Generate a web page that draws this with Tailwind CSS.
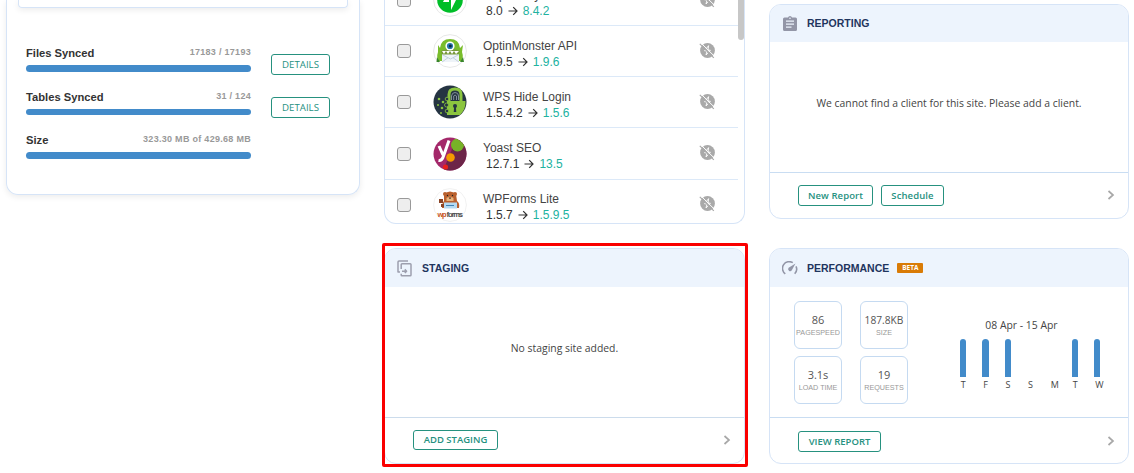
<!DOCTYPE html>
<html lang="en">
<head>
  <meta charset="UTF-8">
  <meta name="viewport" content="width=device-width, initial-scale=1.0">
  <title>Site Dashboard</title>
  <script src="https://cdn.jsdelivr.net/npm/@tailwindcss/browser@4"></script>
</head>

<body class="relative flex h-[473px] w-[1134px] items-start overflow-hidden bg-white pl-1.5 font-['Open_Sans',sans-serif] text-[#444]">

  <!-- Icons -->
  <svg class="hidden">
    <symbol id="arrow" viewBox="0 0 10 10">
      <path d="M0.5 5H9M5.2 1.2L9 5L5.2 8.8" fill="none" stroke="#333" stroke-width="1.2"/>
    </symbol>
    <symbol id="chevron" viewBox="0 0 8 10">
      <path d="M1.5 1L6 5L1.5 9" fill="none" stroke="#a8a8a8" stroke-width="1.7"/>
    </symbol>
    <symbol id="bolt-off" viewBox="0 0 17 17">
      <circle cx="8.5" cy="8.5" r="7.4" fill="#a9a9a9"/>
      <path d="M9.6 3.6L5.6 8.8H8L7 13L11.4 8.2H9Z" fill="none" stroke="#fff" stroke-width=".9"/>
      <path d="M2.2 1.2L16 14.8" stroke="#fff" stroke-width="1"/>
      <path d="M0.8 1.8L14.8 15.8" stroke="#a9a9a9" stroke-width="1.2"/>
    </symbol>
  </svg>

  <!-- Sync status -->
  <section class="h-[195px] w-[354px] rounded-b-xl border border-t-0 border-[#d6e4f7] px-[11px] shadow-[0_2px_6px_rgba(0,0,0,0.08)]">
    <div class="h-2 w-[330px] rounded-b border border-t-0 border-[#d6e4f7] shadow-[0_2px_6px_rgba(0,0,0,0.08)]"></div>
    <div class="flex pt-[38px] pl-2">
      <div class="w-[225px] font-['Liberation_Sans',sans-serif] font-bold">
        <div class="h-[43px]">
          <div class="flex h-[19px] justify-between"><span class="text-[11.2px] leading-[15px] text-[#333]">Files Synced</span><span class="text-[9px] leading-3 tracking-[0.29px] text-[#999]">17183 / 17193</span></div>
          <div class="h-[7px] rounded-full bg-[#428bca]"></div>
        </div>
        <div class="h-[44px] pt-px">
          <div class="flex h-[19px] justify-between"><span class="text-[11.2px] leading-[15px] text-[#333]">Tables Synced</span><span class="text-[9px] leading-3 tracking-[0.29px] text-[#999]">31 / 124</span></div>
          <div class="h-1.5 rounded-full bg-[#428bca]"></div>
        </div>
        <div>
          <div class="flex h-[19px] justify-between"><span class="text-[11.2px] leading-[15px] text-[#333]">Size</span><span class="text-[9px] leading-3 tracking-[0.29px] text-[#999]">323.30 MB of 429.68 MB</span></div>
          <div class="h-[7px] rounded-full bg-[#428bca]"></div>
        </div>
      </div>
      <div class="flex flex-col gap-[22px] pt-2 pl-5">
        <button class="h-[21px] w-[59px] rounded-[3px] border border-[#26917f] pt-0.5 text-[9.7px] font-medium text-[#26917f]">DETAILS</button>
        <button class="h-[21px] w-[59px] rounded-[3px] border border-[#26917f] pt-0.5 text-[9.7px] font-medium text-[#26917f]">DETAILS</button>
      </div>
    </div>
  </section>

  <div class="ml-6 w-[361px]">
    <!-- Plugin updates -->
    <section class="relative h-[224px] overflow-hidden rounded-b-xl border border-t-0 border-[#d6e4f7] font-['Liberation_Sans',sans-serif] text-[12px]">
      <div class="-mt-[25px] w-[353px]">
        <div class="flex h-[51px] items-center border-b border-[#dce9f8] pl-3">
          <span class="size-3.5 rounded-[3px] border border-[#999] bg-[#eee]"></span>
          <svg class="ml-[22px] size-[34px]" viewBox="0 0 34 34">
            <circle cx="17" cy="17" r="16.4" fill="#fff" stroke="#ddd" stroke-width=".7"/>
            <circle cx="17" cy="17" r="12.8" fill="#00be28"/>
            <path d="M16 7V19H10Z M18 27V15H24Z" fill="#fff"/>
          </svg>
          <div class="ml-4 pt-1.5 leading-4"><div>Jetpack by WordPress.com</div><div class="flex items-center gap-[5px] pl-[3px] text-[#333]">8.0 <svg class="size-2.5"><use href="#arrow"/></svg> <span class="text-[#22b29f]">8.4.2</span></div></div>
          <svg class="mr-[22px] mb-0.5 ml-auto size-[17px]"><use href="#bolt-off"/></svg>
        </div>
        <div class="flex h-[51px] items-center border-b border-[#dce9f8] pl-3">
          <span class="size-3.5 rounded-[3px] border border-[#999] bg-[#eee]"></span>
          <svg class="ml-[22px] size-[34px]" viewBox="0 0 34 34">
            <circle cx="17" cy="17" r="16.4" fill="#fff" stroke="#ddd" stroke-width=".7"/>
            <path d="M5 11L7 14Q8 5 17 5Q26 5 27 14L30 11L29 18Q31 24 28 27H6Q3 24 5 18Z" fill="#79bd2b"/>
            <path d="M4 23L7 28H3.5ZM30 23L27 28H31Z" fill="#39852c"/>
            <path d="M8 17Q17 13 27 17L25 21H9Z" fill="#78983c"/>
            <path d="M9 17L11 20L13 17L15 20L17 17L19 20L21 17L23 20L26 17Z" fill="#fff"/>
            <circle cx="17" cy="12" r="4.6" fill="#fff"/><circle cx="17" cy="12" r="3.1" fill="#2677ac"/><circle cx="17.3" cy="12" r="1.5" fill="#102a42"/>
            <path d="M9 20.5H26V28H9Z" fill="#eef3f8"/><path d="M9 20.5L17.5 25L26 20.5M9 28L15 23.7M26 28L20 23.7" fill="none" stroke="#b7c8d6" stroke-width=".8"/>
          </svg>
          <div class="ml-4 pt-1.5 leading-4"><div>OptinMonster API</div><div class="flex items-center gap-[5px] pl-[3px] text-[#333]">1.9.5 <svg class="size-2.5"><use href="#arrow"/></svg> <span class="text-[#22b29f]">1.9.6</span></div></div>
          <svg class="mr-[22px] mb-0.5 ml-auto size-[17px]"><use href="#bolt-off"/></svg>
        </div>
        <div class="flex h-[51px] items-center border-b border-[#dce9f8] pl-3">
          <span class="size-3.5 rounded-[3px] border border-[#999] bg-[#eee]"></span>
          <svg class="ml-[22px] size-[34px]" viewBox="0 0 34 34">
            <circle cx="17" cy="17" r="16.5" fill="#253442"/>
            <path d="M16 17V9.5Q16 4 22 4Q28 4 28 9.5V17" fill="none" stroke="#8bc53f" stroke-width="3"/>
            <path d="M14 16H32.5Q33 24 27 30H14Z" fill="#8bc53f"/>
            <path d="M18.5 15V11Q19 7.5 22 7.5Q25.5 7.5 25.5 11V15M20.7 15V11Q22 9 23.5 11V15" fill="none" stroke="#81909a" stroke-width="1"/>
            <circle cx="22" cy="21" r="2" fill="#253442"/><path d="M21.2 21H22.8L23.3 27H20.7Z" fill="#253442"/>
            <g fill="#8bc53f"><circle cx="6" cy="14" r="1.3"/><circle cx="10" cy="17" r="1.3"/><circle cx="5" cy="20" r="1"/><circle cx="9" cy="23" r="1.3"/><circle cx="8" cy="28" r="1"/></g>
            <g fill="#253442" stroke="#8bc53f" stroke-width=".8"><circle cx="14" cy="14" r="1.8"/><circle cx="13.5" cy="20" r="2"/><circle cx="14" cy="26" r="1.8"/></g>
          </svg>
          <div class="ml-4 pt-1.5 leading-4"><div>WPS Hide Login</div><div class="flex items-center gap-[5px] pl-[3px] text-[#333]">1.5.4.2 <svg class="size-2.5"><use href="#arrow"/></svg> <span class="text-[#22b29f]">1.5.6</span></div></div>
          <svg class="mr-[22px] mb-0.5 ml-auto size-[17px]"><use href="#bolt-off"/></svg>
        </div>
        <div class="flex h-[52px] items-center border-b border-[#dce9f8] pl-3">
          <span class="size-3.5 rounded-[3px] border border-[#999] bg-[#eee]"></span>
          <svg class="ml-[22px] size-[34px]" viewBox="0 0 34 34">
            <clipPath id="round"><circle cx="17" cy="17" r="16.5"/></clipPath>
            <g clip-path="url(#round)">
              <path d="M0 0H34V34H0Z" fill="#a4286a"/>
              <path d="M24 0H34V34H10Z" fill="#6c2548"/>
              <path d="M6 9L10 18M16 3.5L10.5 19Q9 24 5.5 23.5" fill="none" stroke="#fff" stroke-width="3"/>
              <circle cx="24.5" cy="8" r="6.5" fill="#77b227"/><circle cx="17.5" cy="20.5" r="4.3" fill="#f49a00"/><circle cx="12.5" cy="30" r="2.6" fill="#e8201c"/>
            </g>
          </svg>
          <div class="ml-4 pt-1 leading-4"><div>Yoast SEO</div><div class="flex items-center gap-[5px] pl-[3px] text-[#333]">12.7.1 <svg class="size-2.5"><use href="#arrow"/></svg> <span class="text-[#22b29f]">13.5</span></div></div>
          <svg class="mr-[22px] mb-[3px] ml-auto size-[17px]"><use href="#bolt-off"/></svg>
        </div>
        <div class="flex h-[49px] items-center pl-3">
          <span class="size-3.5 rounded-[3px] border border-[#999] bg-[#eee]"></span>
          <svg class="ml-[22px] size-[34px]" viewBox="0 0 34 34">
            <circle cx="17" cy="17" r="16.4" fill="#fff" stroke="#e8e8e8" stroke-width=".6"/>
            <g fill="#b9602e"><circle cx="12" cy="6" r="2"/><circle cx="22" cy="6" r="2"/><path d="M11 6Q17 1 23 6L24 13Q27 15 26 20H9Q9 15 11 13Z"/></g>
            <path d="M6 11H10V15H6ZM8 16H11L12 19H8Z" fill="#8b4526"/>
            <path d="M13.5 10Q17 7 20.5 10V13H13.5Z" fill="#e8b37d"/><path d="M15.5 9.5H18.5L17 11.2Z" fill="#442a20"/><circle cx="14.5" cy="7.5" r=".7" fill="#222"/><circle cx="19.5" cy="7.5" r=".7" fill="#222"/>
            <path d="M11 14.5H24V20.5H11Z" fill="#b4daf2"/><path d="M13 17.5H21" stroke="#3f83b5" stroke-width="1.2"/>
            <text x="4.5" y="29" font-family="Liberation Sans, sans-serif" font-size="7.5" font-weight="700" fill="#c9571c" textLength="9">wp</text>
            <text x="13.8" y="29" font-family="Liberation Sans, sans-serif" font-size="7.5" fill="#333" stroke="#333" stroke-width=".2" textLength="16">forms</text>
          </svg>
          <div class="ml-4 pt-1 leading-4"><div>WPForms Lite</div><div class="flex items-center gap-[5px] pl-[3px] text-[#333]">1.5.7 <svg class="size-2.5"><use href="#arrow"/></svg> <span class="text-[#22b29f]">1.5.9.5</span></div></div>
          <svg class="mr-[22px] mb-[3px] ml-auto size-[17px]"><use href="#bolt-off"/></svg>
        </div>
      </div>
      <!-- scrollbar thumb -->
      <div class="absolute top-0 right-0 h-10 w-1.5 rounded-b-full bg-[#c7c7c7]"></div>
    </section>

    <!-- Staging -->
    <section class="mt-6 flex h-[216px] flex-col overflow-hidden rounded-xl border border-[#d6e4f7]">
      <header class="flex h-[38px] shrink-0 items-center bg-[#edf4fd] pl-3">
        <svg class="size-[17px]" viewBox="0 0 17 17" fill="none" stroke="#9d9fae" stroke-width="1.5" stroke-linejoin="round">
          <path d="M11 1H2Q1 1 1 2V12H3M4.2 9V4.5Q4.2 3.7 5 3.7H13.2Q14 3.7 14 4.5V15Q14 15.8 13.2 15.8H5Q4.2 15.8 4.2 15V13.7M5 11.2H9.5M7.8 9.4L9.6 11.2L7.8 13"/>
        </svg>
        <h2 class="ml-2 pt-0.5 font-['Liberation_Sans',sans-serif] text-[10.5px] font-bold text-[#1f355e]">STAGING</h2>
      </header>
      <div class="flex flex-1 items-center justify-center pb-1.5 text-[10.4px]">No staging site added.</div>
      <footer class="flex h-[46px] items-center justify-between border-t border-[#ccdcec] pr-[13px] pl-7">
        <button class="mb-px h-5 w-[85px] rounded-[3px] border border-[#26917f] pt-px text-[9.5px] font-semibold text-[#26917f]">ADD STAGING</button>
        <svg class="mb-0.5 h-2.5 w-2"><use href="#chevron"/></svg>
      </footer>
    </section>
  </div>

  <div class="ml-6 w-[360px] pt-1">
    <!-- Reporting -->
    <section class="flex h-[215px] flex-col overflow-hidden rounded-xl border border-[#d6e4f7]">
      <header class="flex h-[37px] shrink-0 items-center bg-[#edf4fd] pl-[13px]">
        <svg class="h-[15px] w-3.5" viewBox="0 0 14 15">
          <path d="M1.5 1.5H5Q5.5 0 7 0T9 1.5H12.5Q14 1.5 14 3V13.5Q14 15 12.5 15H1.5Q0 15 0 13.5V3Q0 1.5 1.5 1.5Z" fill="#9396a7"/>
          <path d="M3 5.2H11M3 8.2H11M3 11.2H8.5" stroke="#edf4fd" stroke-width="1.3"/><circle cx="7" cy="2.2" r=".8" fill="#edf4fd"/>
        </svg>
        <h2 class="ml-[10px] font-['Liberation_Sans',sans-serif] text-[10.5px] font-bold text-[#1f355e]">REPORTING</h2>
      </header>
      <div class="flex flex-1 items-center justify-center pb-1.5 text-[10.4px]">We cannot find a client for this site. Please add a client.</div>
      <footer class="flex h-[46px] items-center gap-2 border-t border-[#c9ddf2] pr-[13px] pl-7">
        <button class="h-[21px] w-[75px] rounded-[3px] border border-[#26917f] pt-0.5 text-[9.5px] font-semibold tracking-[0.1px] text-[#26917f]">New Report</button>
        <button class="h-[21px] w-[63px] rounded-[3px] border border-[#26917f] pt-0.5 text-[9.5px] font-semibold tracking-[0.1px] text-[#26917f]">Schedule</button>
        <svg class="mb-0.5 ml-auto h-2.5 w-2"><use href="#chevron"/></svg>
      </footer>
    </section>

    <!-- Performance -->
    <section class="mt-[29px] flex h-[216px] flex-col overflow-hidden rounded-xl border border-[#d6e4f7]">
      <header class="flex h-[38px] shrink-0 items-center bg-[#edf4fd] pl-3">
        <svg class="h-[15px] w-4" viewBox="0 0 16 15">
          <path d="M3.3 12.8A6.7 6.7 0 0 1 10.8 1.7M14 5.3A6.7 6.7 0 0 1 12.7 12.8" fill="none" stroke="#9396a7" stroke-width="1.6"/>
          <path d="M13.5 2.5L9.8 9.3A2 2 0 1 1 6.6 6.8Z" fill="#9396a7"/>
        </svg>
        <h2 class="ml-[9px] pt-0.5 font-['Liberation_Sans',sans-serif] text-[10.5px] font-bold text-[#1f355e]">PERFORMANCE</h2>
        <span class="ml-2 h-2.5 w-[26px] rounded-[1px] bg-[#d97b06] text-center text-[6.5px] leading-[10px] font-bold text-white">BETA</span>
      </header>
      <div class="flex flex-1 pt-3.5 pl-6">
        <div class="grid h-[103px] w-[114px] grid-cols-[48px_48px] grid-rows-[48px_48px] justify-between gap-y-[7px] text-center">
          <div class="rounded-md border border-[#c5daf1] pt-[11px]"><div class="text-[11px] leading-[13px] text-[#555]">86</div><div class="-mx-1 font-['Liberation_Sans',sans-serif] text-[7.2px] leading-[14px] text-[#999]">PAGESPEED</div></div>
          <div class="rounded-md border border-[#c5daf1] pt-[11px]"><div class="-mx-1 text-[10.2px] leading-[14px] text-[#555]">187.8KB</div><div class="font-['Liberation_Sans',sans-serif] text-[7.2px] leading-[12px] text-[#999]">SIZE</div></div>
          <div class="rounded-md border border-[#c5daf1] pt-[11px]"><div class="text-[11px] leading-[13px] text-[#555]">3.1s</div><div class="-mx-1 font-['Liberation_Sans',sans-serif] text-[7.2px] leading-[14px] text-[#999]">LOAD TIME</div></div>
          <div class="rounded-md border border-[#c5daf1] pt-[11px]"><div class="text-[11px] leading-[13px] text-[#555]">19</div><div class="-mx-1 font-['Liberation_Sans',sans-serif] text-[7.2px] leading-[14px] text-[#999]">REQUESTS</div></div>
        </div>
        <div class="ml-11 w-[157px] pt-[17px]">
          <div class="pr-[18px] text-center text-[10.4px] leading-[14px]">08 Apr - 15 Apr</div>
          <div class="mt-[7px] grid grid-cols-7 text-center text-[9px] leading-4">
            <div><div class="mx-auto h-[38px] w-1.5 rounded-t-full bg-[#428bca]"></div>T</div>
            <div><div class="mx-auto h-[38px] w-[7px] rounded-t-full bg-[#428bca]"></div>F</div>
            <div><div class="mx-auto h-[38px] w-1.5 rounded-t-full bg-[#428bca]"></div>S</div>
            <div class="pt-[38px]">S</div>
            <div class="pt-[38px] pl-1">M</div>
            <div><div class="mx-auto h-[38px] w-1.5 rounded-t-full bg-[#428bca]"></div>T</div>
            <div class="pr-px"><div class="mx-auto h-[38px] w-1.5 rounded-t-full bg-[#428bca]"></div><span class="pl-1">W</span></div>
          </div>
        </div>
      </div>
      <footer class="flex h-[46px] items-center justify-between border-t border-[#c9ddf2] pr-[13px] pl-7">
        <button class="mt-px h-[21px] w-[83px] rounded-[3px] border border-[#26917f] pt-0.5 text-[9.5px] font-semibold text-[#26917f]">VIEW REPORT</button>
        <svg class="h-2.5 w-2"><use href="#chevron"/></svg>
      </footer>
    </section>
  </div>

  <!-- highlight around the staging card -->
  <div class="pointer-events-none absolute top-[243px] left-[382px] h-[224px] w-[366px] rounded-[2px] border-3 border-[#fa0000]"></div>
</body>
</html>
